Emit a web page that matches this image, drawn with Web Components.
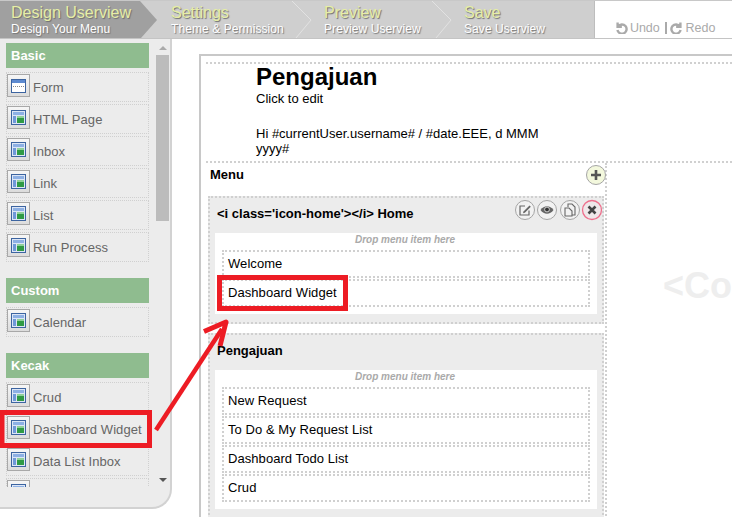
<!DOCTYPE html>
<html>
  <head>
    <meta charset="utf-8">
    <title>Userview Builder</title>
    <style>
      html, body { margin: 0; height: 517px; overflow: hidden; background: #fff; }
      body { font: 13px "Liberation Sans", Arial, sans-serif; color: #000; }
    </style>
  </head>
  <body>
    <ub-app>
      <ub-steps slot="top">
        <ub-step active title-text="Design Userview" sub="Design Your Menu" width="157" inset="11"></ub-step>
        <ub-step title-text="Settings" sub="Theme &amp; Permission" width="155" inset="14"></ub-step>
        <ub-step title-text="Preview" sub="Preview Userview" width="140" inset="12"></ub-step>
        <ub-step title-text="Save" sub="Save Userview" width="142" inset="12" last></ub-step>
      </ub-steps>
      <ub-palette slot="side">
        <ub-section label="Basic">
          <ub-item icon="form">Form</ub-item>
          <ub-item>HTML Page</ub-item>
          <ub-item>Inbox</ub-item>
          <ub-item>Link</ub-item>
          <ub-item>List</ub-item>
          <ub-item>Run Process</ub-item>
        </ub-section>
        <ub-section label="Custom">
          <ub-item>Calendar</ub-item>
        </ub-section>
        <ub-section label="Kecak">
          <ub-item>Crud</ub-item>
          <ub-item>Dashboard Widget</ub-item>
          <ub-item>Data List Inbox</ub-item>
          <ub-item></ub-item>
        </ub-section>
      </ub-palette>
      <ub-canvas slot="main">
        <ub-menu-group label="&lt;i class='icon-home'&gt;&lt;/i&gt; Home" actions>
          <ub-menu-item>Welcome</ub-menu-item>
          <ub-menu-item>Dashboard Widget</ub-menu-item>
        </ub-menu-group>
        <ub-menu-group label="Pengajuan">
          <ub-menu-item>New Request</ub-menu-item>
          <ub-menu-item>To Do &amp; My Request List</ub-menu-item>
          <ub-menu-item>Dashboard Todo List</ub-menu-item>
          <ub-menu-item>Crud</ub-menu-item>
        </ub-menu-group>
      </ub-canvas>
      <ub-callouts slot="over"></ub-callouts>
    </ub-app>

    <script>
      (function builder(document, customElements) {
        'use strict';

        const FONT = '"Liberation Sans", Arial, sans-serif';

        class UbApp extends HTMLElement {
          constructor() {
            super();
            this.attachShadow({mode: 'open'}).innerHTML = `
              <style>
                :host { display: block; position: relative; width: 732px; height: 517px; overflow: hidden; font-family: ${FONT}; }
                .body { display: flex; height: 478px; }
              </style>
              <slot name="top"></slot>
              <div class="body">
                <slot name="side"></slot>
                <slot name="main"></slot>
              </div>
              <slot name="over"></slot>
            `;
          }
        }

        class UbSteps extends HTMLElement {
          constructor() {
            super();
            this.attachShadow({mode: 'open'}).innerHTML = `
              <style>
                :host { display: flex; height: 39px; box-sizing: border-box; border-bottom: 1px solid #c4c4c4; background: #fff; border-top: 1px solid #c8c8c8; }
                .steps { display: flex; background: #cfcfcf; width: 594px; flex: none; }
                .tools {
                  flex: 1; display: flex; align-items: flex-end; box-sizing: border-box;
                  padding: 0 0 2px 20px; border-left: 1px solid #bdbdbd; color: #aaa; font-size: 12.5px; line-height: 15px;
                }
                svg { width: 13px; height: 13px; margin: 0 2px 2px 0; flex: none; }
                i { display: block; width: 2px; height: 12px; background: #aaa; margin: 0 3px 2px 6px; flex: none; }
                .u { letter-spacing: -.1px; }
              </style>
              <div class="steps"><slot></slot></div>
              <div class="tools">
                <svg viewBox="0 0 14 14"><path d="M2.800 1.600V6.200H7.400M3.400 5.800A5 5 0 1 1 2.600 9.800" fill="none" stroke="#aaa" stroke-width="2.600"/></svg>
                <span class="u">Undo</span><i></i>
                <svg viewBox="0 0 14 14"><path d="M11.200 1.600V6.200H6.600M10.600 5.800A5 5 0 1 0 11.400 9.800" fill="none" stroke="#aaa" stroke-width="2.600"/></svg>
                <span>Redo</span>
              </div>
            `;
          }
        }

        class UbStep extends HTMLElement {
          constructor() {
            super();
            const active = this.hasAttribute('active');
            const w = this.getAttribute('width');
            this.attachShadow({mode: 'open'}).innerHTML = `
              <style>
                :host { display: block; position: relative; width: ${w}px; height: 37px; box-sizing: border-box; padding: 3px 0 0 ${this.getAttribute('inset')}px; ${active ? 'z-index: 1;' : ''} }
                svg { position: absolute; left: 0; top: 0; }
                .t, .s { position: relative; white-space: nowrap; }
                .t { font-size: 16px; line-height: 18px; color: #e6eea6; text-shadow: 1px 1px 1px #6e6e6e; }
                .s { font-size: 12px; line-height: 13px; margin-top: 1px; color: #fff; letter-spacing: .08px; text-shadow: 1px 1px 1px #777; }
              </style>
              ${active
                ? `<svg width="158" height="37"><path d="M0 0H140L157 19 141 37H0Z" fill="#a0a0a0"/></svg>`
                : this.hasAttribute('last') ? ''
                : `<svg width="${w}" height="37"><path d="M${w - 20} 0L${w - 1} 19 ${w - 16} 37" fill="none" stroke="#e2e2e2" stroke-width="1"/></svg>`}
              <div class="t">${this.getAttribute('title-text')}</div>
              <div class="s">${this.getAttribute('sub').replace('&', '&amp;')}</div>
            `;
          }
        }

        class UbPalette extends HTMLElement {
          constructor() {
            super();
            this.attachShadow({mode: 'open'}).innerHTML = `
              <style>
                :host {
                  display: flex; flex: none; box-sizing: border-box; width: 172px; height: 470px;
                  background: #ececec; border-right: 2px solid #d2d2d2; border-bottom: 2px solid #d2d2d2;
                  border-bottom-right-radius: 20px;
                }
                .list { width: 150px; height: 448px; overflow: hidden; box-sizing: border-box; padding: 4px 0 0 6px; flex: none; }
                .bar { width: 13px; margin: 4px 0 0 6px; height: 444px; display: flex; flex-direction: column; align-items: center; }
                .up, .down { width: 0; height: 0; border: 4px solid transparent; }
                .up { border-bottom: 4px solid #aaa; border-top: 0; margin: 3px 0 5px; }
                .thumb { width: 13px; height: 166px; background: #bcbcbc; }
                .down { border-top: 4px solid #555; border-bottom: 0; margin-top: auto; margin-bottom: 5px; }
              </style>
              <div class="list"><slot></slot></div>
              <div class="bar"><div class="up"></div><div class="thumb"></div><div class="down"></div></div>
            `;
          }
        }

        class UbSection extends HTMLElement {
          constructor() {
            super();
            this.attachShadow({mode: 'open'}).innerHTML = `
              <style>
                :host { display: block; width: 143px; margin-bottom: 16px; }
                .head {
                  height: 25px; line-height: 26px; background: #8fbc8f; color: #fff; font-weight: bold; font-size: 13px;
                  padding-left: 5px; margin-bottom: 4px;
                }
              </style>
              <div class="head">${this.getAttribute('label')}</div>
              <slot></slot>
            `;
          }
        }

        class UbItem extends HTMLElement {
          constructor() {
            super();
            const glyph = this.getAttribute('icon') === 'form'
              ? `<rect x="2.5" y="3.5" width="14" height="13" fill="#fff" stroke="#3c64a0"/>
                 <rect x="3" y="4" width="13" height="3" fill="#5d8ad0"/>
                 <path d="M4 10.5h11" stroke="#888" stroke-dasharray="1 1"/>`
              : `<rect x="2.5" y="2.5" width="14" height="14" fill="#dce6f6" stroke="#3c64a0"/>
                 <rect x="4" y="4" width="11" height="3" fill="#8db0e4"/>
                 <rect x="4" y="8" width="3" height="7" fill="#6f98d8"/>
                 <rect x="8" y="8" width="7" height="7" fill="#2f9a45"/>
                 <rect x="8" y="8" width="7" height="2" fill="#8fd09a"/>`;
            this.attachShadow({mode: 'open'}).innerHTML = `
              <style>
                :host {
                  display: flex; align-items: center; gap: 3px; box-sizing: border-box; width: 143px; height: 30px; margin-bottom: 2px;
                  border: 1px dotted #d0d0d0; color: #666; font-size: 13px; letter-spacing: .06px; white-space: nowrap;
                }
                .icon {
                  width: 21px; height: 21px; flex: none; border: 1px solid #a8a8a8; background: linear-gradient(#f6f6f6, #dcdcdc);
                  display: flex; align-items: center; justify-content: center; margin-top: -3px;
                }
              </style>
              <span class="icon"><svg width="19" height="19" viewBox="0 0 19 19">${glyph}</svg></span>
              <slot></slot>
            `;
          }
        }

        class UbCanvas extends HTMLElement {
          constructor() {
            super();
            this.attachShadow({mode: 'open'}).innerHTML = `
              <style>
                :host { display: block; flex: 1; min-width: 0; box-sizing: border-box; padding: 15px 0 0 27px; font-size: 13px; }
                .frame {
                  border: solid #c8c8c8; border-width: 2px 0 0 2px; height: 470px; box-sizing: border-box;
                  padding: 6px 0 0 5px; overflow: hidden;
                }
                .head { border-top: 2px dotted #d0d0d0; height: 99px; box-sizing: border-box; padding: 0 0 0 50px; }
                h1 { font-size: 24px; line-height: 26px; margin: 0 0 1px; font-weight: bold; }
                p { margin: 0; line-height: 15px; width: 290px; }
                p + p { margin-top: 20px; }
                .row { display: flex; border-top: 2px dotted #d0d0d0; }
                .menu { width: 401px; flex: none; box-sizing: border-box; border-right: 2px dotted #d0d0d0; padding: 0 1px 0 2px; }
                .menu-head { display: flex; align-items: center; justify-content: space-between; height: 33px; box-sizing: border-box; padding: 0 0 11px 4px; margin-left: -2px; font-weight: bold; }
                .plus { display: block; width: 22px; height: 22px; margin: 1px -3px 0 0; flex: none; }
                .content { color: #eee; font-weight: bold; font-size: 36px; padding: 102px 0 0 56px; white-space: nowrap; }
              </style>
              <div class="frame">
                <div class="head">
                  <h1>Pengajuan</h1>
                  <p>Click to edit</p>
                  <p>Hi #currentUser.username# / #date.EEE, d MMM yyyy#</p>
                </div>
                <div class="row">
                  <div class="menu">
                    <div class="menu-head">
                      <span>Menu</span>
                      <svg class="plus" viewBox="0 0 22 22"><circle cx="11" cy="11" r="9.5" fill="#f3f8dd" stroke="#a5a5a5"/><path d="M11 6v10M6 11h10" stroke="#555" stroke-width="2.6"/></svg>
                    </div>
                    <slot></slot>
                  </div>
                  <div class="content">&lt;Content</div>
                </div>
              </div>
            `;
          }
        }

        class UbMenuGroup extends HTMLElement {
          constructor() {
            super();
            const actions = this.hasAttribute('actions') ? `
              <span class="actions">
                <svg viewBox="0 0 22 22"><circle cx="11" cy="11" r="9.5" fill="#f2f2f2" stroke="#a5a5a5"/><path d="M15 11.5V16H6V7h5" fill="none" stroke="#666" stroke-width="1.2"/><path d="M9.5 12.5l6-6 1.3 1.3-6 6-1.8.5z" fill="#666"/></svg>
                <svg viewBox="0 0 22 22"><circle cx="11" cy="11" r="9.5" fill="#f2f2f2" stroke="#a5a5a5"/><path d="M4.5 11c3.5-5 9.5-5 13 0-3.5 5-9.500 5-13 0z" fill="#666"/><circle cx="11" cy="10.500" r="2.400" fill="#333" stroke="#eee" stroke-width=".8"/></svg>
                <svg viewBox="0 0 22 22"><circle cx="11" cy="11" r="9.5" fill="#f2f2f2" stroke="#a5a5a5"/><path d="M9 8V5h4l3 3v8h-3" fill="none" stroke="#666" stroke-width="1.100"/><path d="M6 9h4l3 3v5H6z" fill="#f2f2f2" stroke="#666" stroke-width="1.100"/></svg>
                <svg viewBox="0 0 22 22"><circle cx="11" cy="11" r="9.5" fill="#efe8ea" stroke="#ee6f8c" stroke-width="1.300"/><path d="M7.500 7.500l7 7M14.500 7.500l-7 7" stroke="#444" stroke-width="2.600"/></svg>
              </span>` : '';
            this.attachShadow({mode: 'open'}).innerHTML = `
              <style>
                :host { display: block; background: #ececec; border: 2px dotted #d0d0d0; margin-bottom: 9px; }
                .title { display: flex; align-items: center; justify-content: space-between; height: 35px; box-sizing: border-box; padding: 0 0 4px 7px; font-weight: bold; font-size: 13px; }
                .actions { display: flex; gap: .5px; margin: -7px -1px 0 0; }
                svg { width: 22px; height: 22px; display: block; }
                .drop { background: #fff; margin: 0 5px; padding: 0 5px 6px 7px; width: 370px; }
                .hint { height: 17px; text-align: center; color: #aaa; font: italic bold 10px/13px ${FONT}; padding-right: 4px; }
                .pad { height: 8px; }
              </style>
              <div class="title"><span>${this.getAttribute('label').replace(/</g, '&lt;').replace(/>/g, '&gt;')}</span>${actions}</div>
              <div class="drop">
                <div class="hint">Drop menu item here</div>
                <slot></slot>
              </div>
              <div class="pad"></div>
            `;
          }
        }

        class UbMenuItem extends HTMLElement {
          constructor() {
            super();
            this.attachShadow({mode: 'open'}).innerHTML = `
              <style>
                :host {
                  display: block; box-sizing: border-box; width: 368px; height: 28px; line-height: 24px; margin-bottom: 1px;
                  border: 2px dotted #d0d0d0; padding-left: 4px; color: #000; font-size: 13px; letter-spacing: .06px;
                }
              </style>
              <slot></slot>
            `;
          }
        }

        class UbCallouts extends HTMLElement {
          constructor() {
            super();
            this.attachShadow({mode: 'open'}).innerHTML = `
              <style>
                :host { display: block; position: absolute; left: 0; top: 0; width: 732px; height: 517px; pointer-events: none; }
                svg { display: block; }
              </style>
              <svg width="732" height="517" viewBox="0 0 732 517">
                <rect x="2" y="412.500" width="147.500" height="33" fill="none" stroke="#ed1c24" stroke-width="5"/>
                <rect x="219.500" y="277.500" width="126" height="31" fill="none" stroke="#ed1c24" stroke-width="5"/>
                <path d="M156 430L222 329" fill="none" stroke="#ed1c24" stroke-width="4.500"/>
                <path d="M204 331.500L226 322 220 346" fill="none" stroke="#ed1c24" stroke-width="5" stroke-linejoin="round"/>
              </svg>
            `;
          }
        }

        customElements.define('ub-app', UbApp);
        customElements.define('ub-steps', UbSteps);
        customElements.define('ub-step', UbStep);
        customElements.define('ub-palette', UbPalette);
        customElements.define('ub-section', UbSection);
        customElements.define('ub-item', UbItem);
        customElements.define('ub-canvas', UbCanvas);
        customElements.define('ub-menu-group', UbMenuGroup);
        customElements.define('ub-menu-item', UbMenuItem);
        customElements.define('ub-callouts', UbCallouts);
      })(document, window.customElements);
    </script>
  </body>
</html>
